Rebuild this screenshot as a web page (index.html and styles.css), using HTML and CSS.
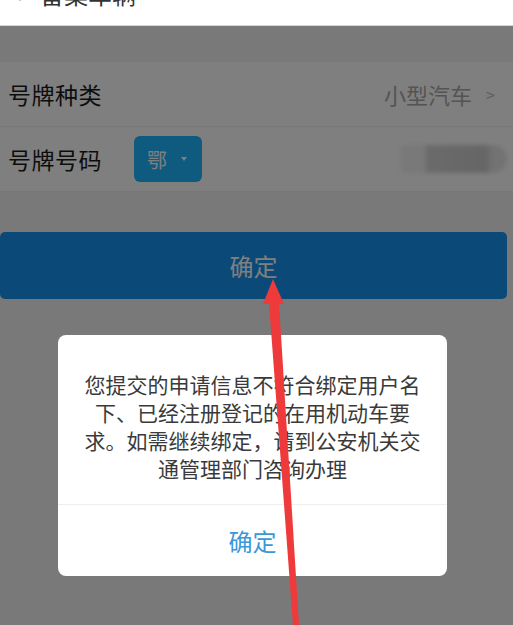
FILE: index.html
```html
<!DOCTYPE html>
<html lang="zh-CN">

<head>
    <meta charset="utf-8">
    <title>备案车辆</title>
    <link rel="stylesheet" href="styles.css">
</head>

<body>
    <div class="header">
        <div class="title"><span class="back">&lt;</span>备案车辆</div>
    </div>
    <div class="page">
        <div class="rows">
            <div class="row">
                <span class="label">号牌种类</span>
                <span class="value">小型汽车<span class="chevron">&gt;</span></span>
            </div>
            <div class="row">
                <span class="label">号牌号码</span>
                <div class="province">鄂<span class="caret"></span></div>
                <div class="plate"></div>
            </div>
        </div>
        <div class="submit">确定</div>

        <div class="mask">
            <div class="dialog">
                <p class="message">您提交的申请信息不符合绑定用户名下、已经注册登记的在用机动车要求。如需继续绑定，请到公安机关交通管理部门咨询办理</p>
                <div class="dialog-btn">确定</div>
            </div>
        </div>
    </div>

    <svg class="arrow" width="513" height="625" viewBox="0 0 513 625">
        <polygon points="273,279 263,304 284,304" fill="#ee3a3a" />
        <polygon points="269,303 279,303 299,625 293,625" fill="#ee3a3a" />
    </svg>
</body>

</html>
```

FILE: styles.css
```css
* {
    margin: 0;
    padding: 0;
    box-sizing: border-box;
}

body {
    width: 513px;
    height: 625px;
    overflow: hidden;
    background: #f2f2f2;
    font-family: "Noto Sans CJK SC", "Noto Sans", sans-serif;
    position: relative;
}

.header {
    height: 26px;
    background: #ffffff;
    border-bottom: 1px solid #d6d6d6;
    overflow: hidden;
}

.title {
    margin-top: -18px;
    padding-left: 8px;
    font-size: 24px;
    line-height: 24px;
    color: #333;
    display: flex;
}

.back {
    width: 32px;
    color: #666;
}

.page {
    position: relative;
    height: 599px;
    padding-top: 36px;
}

.rows {
    background: #ffffff;
}

.row {
    height: 65px;
    display: flex;
    align-items: center;
    padding: 0 8px;
    border-bottom: 1px solid #f0f0f0;
}

.label {
    font-size: 23px;
    color: #1a1a1a;
    width: 126px;
    letter-spacing: 0.5px;
}

.value {
    margin-left: auto;
    padding-right: 10px;
    font-size: 22px;
    color: #a8a8a8;
    display: flex;
    align-items: center;
}

.chevron {
    font-size: 16px;
    margin-left: 14px;
    color: #c0c0c0;
}

.province {
    width: 68px;
    height: 46px;
    border-radius: 6px;
    background: #1eb6ff;
    color: #ffffff;
    font-size: 20px;
    display: flex;
    align-items: center;
    padding-left: 13px;
}

.caret {
    margin-left: 14px;
    border-left: 3px solid transparent;
    border-right: 3px solid transparent;
    border-top: 4px solid #ffffff;
}

.plate {
    margin-left: auto;
    margin-right: -2px;
    width: 106px;
    height: 28px;
    border-radius: 0 14px 14px 0;
    background: linear-gradient(to right, #f2f2f2 0%, #f2f2f2 22%, #d6d6d6 25%, #cccccc 80%, #e6e6e6 86%, #e6e6e6 100%);
    filter: blur(2px);
}

.submit {
    margin-top: 40px;
    margin-right: 6px;
    height: 67px;
    border-radius: 5px;
    background: #1694f0;
    color: #ffffff;
    font-size: 24px;
    display: flex;
    align-items: center;
    justify-content: center;
}

.mask {
    position: absolute;
    inset: 0;
    background: rgba(0, 0, 0, 0.5);
    padding: 309px 0 0 58px;
}

.dialog {
    width: 389px;
    background: #ffffff;
    border-radius: 8px;
}

.message {
    padding: 35px 18px 22px;
    font-size: 21px;
    line-height: 28px;
    color: #3a3a3a;
    text-align: center;
}

.dialog-btn {
    height: 72px;
    border-top: 1px solid #eeeeee;
    color: #3a98d8;
    font-size: 24px;
    display: flex;
    align-items: center;
    justify-content: center;
}

.arrow {
    position: absolute;
    top: 0;
    left: 0;
}
```
